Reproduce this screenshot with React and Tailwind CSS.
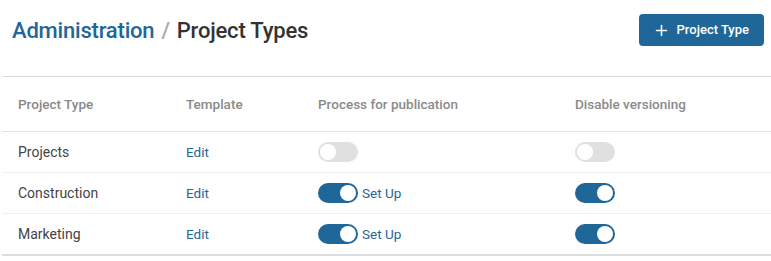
import { Plus } from "lucide-react";

const rows = [
  { name: "Projects", publish: false, noVersion: false },
  { name: "Construction", publish: true, noVersion: true },
  { name: "Marketing", publish: true, noVersion: true },
];

function Toggle({ on }) {
  return (
    <span
      className={`inline-flex items-center w-[40px] h-[20px] rounded-full p-[2px] ${
        on ? "bg-[#1f6699] justify-end" : "bg-[#e0e0e0] justify-start"
      }`}
    >
      <span className="block w-[16px] h-[16px] rounded-full bg-white" />
    </span>
  );
}

export default function App() {
  return (
    <div
      className="w-[771px] h-[261px] bg-white overflow-hidden"
      style={{ fontFamily: "Roboto, 'Liberation Sans', sans-serif" }}
    >
      <div className="flex items-start justify-between pl-[12px] pr-[7px] pt-[14px] h-[76px]">
        <h1 className="mt-[1px] text-[22px] leading-[32px] font-medium tracking-[-0.2px]">
          <span className="text-[#1f6699]">Administration</span>
          <span className="text-[#aaaaaa] mx-[7px]">/</span>
          <span className="text-[#333333]">Project Types</span>
        </h1>
        <button className="flex items-center gap-[7px] h-[32px] pl-[14px] pr-[15px] rounded-[4px] bg-[#1f6699] text-white text-[13px] font-medium">
          <Plus size={17} strokeWidth={2.2} />
          Project Type
        </button>
      </div>

      <div className="ml-[2px] border-t border-[#dcdcdc]">
        <div className="grid grid-cols-[168px_132px_257px_1fr] pl-[16px] h-[55px] items-center text-[13.5px] font-medium text-[#8a8a8a] border-b border-[#e4e4e4]">
          <div>Project Type</div>
          <div>Template</div>
          <div>Process for publication</div>
          <div>Disable versioning</div>
        </div>
        {rows.map((r, i) => (
          <div
            key={r.name}
            className={`grid grid-cols-[168px_132px_257px_1fr] pl-[16px] items-center text-[14px] ${
              i === rows.length - 1
                ? "h-[42px] border-b-2 border-[#dcdcdc]"
                : "h-[41px] border-b border-[#f0f0f0]"
            }`}
          >
            <div className="text-[#444444]">{r.name}</div>
            <div className="text-[#1f6699] text-[13.5px]">Edit</div>
            <div className="flex items-center gap-[4px]">
              <Toggle on={r.publish} />
              {r.publish && (
                <span className="text-[#1f6699] text-[13.5px]">Set Up</span>
              )}
            </div>
            <div className="flex items-center">
              <Toggle on={r.noVersion} />
            </div>
          </div>
        ))}
      </div>
    </div>
  );
}
